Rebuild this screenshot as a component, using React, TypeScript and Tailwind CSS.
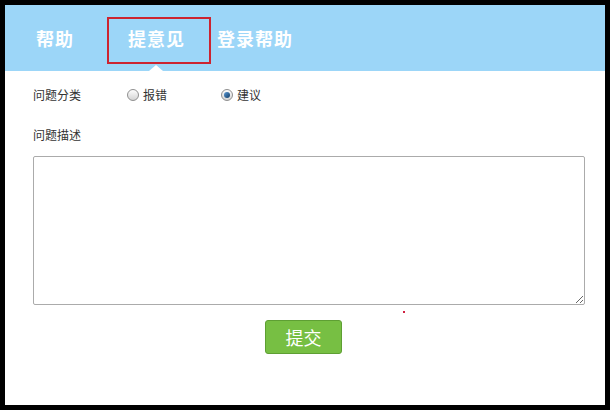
import { useState } from "react";

const cjk = "font-['Noto_Sans_CJK_SC','Noto_Sans',sans-serif]";

type Kind = "bug" | "advice";

function Radio({ checked, onClick }: { checked: boolean; onClick: () => void }) {
  return (
    <span
      onClick={onClick}
      className="relative inline-flex w-[12px] h-[12px] rounded-full border border-[#8f8f8f] bg-gradient-to-b from-[#fdfdfd] to-[#d4d4d4] items-center justify-center cursor-pointer"
    >
      {checked && (
        <span className="w-[6px] h-[6px] rounded-full bg-gradient-to-br from-[#5a9ad6] to-[#123d66]" />
      )}
    </span>
  );
}

export default function App() {
  const [kind, setKind] = useState<Kind>("advice");
  const [text, setText] = useState("");

  return (
    <div className="w-[610px] h-[410px] bg-black p-[5px]">
      <div className={`relative bg-white h-full flex flex-col ${cjk}`}>
        {/* tabs */}
        <div className="h-[66px] bg-[#9cd6f8] flex items-center">
          <span className="ml-[31px] w-[71px] text-white font-bold text-[18px] tracking-[1px]">
            帮助
          </span>
          <div className="relative mt-[5px] w-[104px] h-[47px] border-2 border-[#cc2430] flex items-center justify-center">
            <span className="text-white font-bold text-[18px] tracking-[1px] -ml-[5px] -mt-[5px]">
              提意见
            </span>
            <span className="absolute left-[40px] -bottom-[9px] w-0 h-0 border-x-[7px] border-x-transparent border-b-[6px] border-b-white" />
          </div>
          <span className="ml-[6px] text-white font-bold text-[18px] tracking-[1px]">
            登录帮助
          </span>
        </div>

        <div className="px-[28px] text-[12px] text-[#333]">
          <div className="mt-[14px] h-[20px] flex items-center">
            <span className="w-[94px]">问题分类</span>
            <Radio checked={kind === "bug"} onClick={() => setKind("bug")} />
            <span className="ml-[4px] w-[78px]">报错</span>
            <Radio checked={kind === "advice"} onClick={() => setKind("advice")} />
            <span className="ml-[4px]">建议</span>
          </div>

          <div className="mt-[20px] h-[20px] flex items-center">问题描述</div>

          <textarea
            value={text}
            onChange={(e) => setText(e.target.value)}
            className="mt-[11px] block w-[552px] h-[149px] border border-[#ababab] rounded-[2px] outline-none p-1"
          />

          <button className="mt-[15px] ml-[232px] w-[77px] h-[34px] rounded-[3px] bg-[#77bf43] border border-[#5e9f33] text-white text-[18px] flex items-center justify-center">
            提交
          </button>
        </div>

        <span className="absolute left-[398px] top-[306px] w-[2px] h-[2px] bg-[#d02040]" />
      </div>
    </div>
  );
}
